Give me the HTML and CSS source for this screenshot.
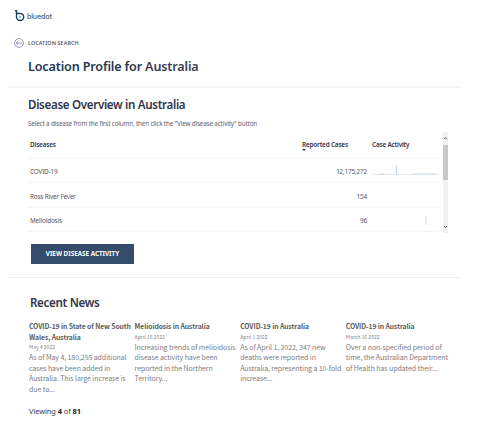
FILE: index.html
```html
<!DOCTYPE html>
<html lang="en">
<head>
<meta charset="utf-8">
<title>Location Profile for Australia</title>
<link rel="stylesheet" href="styles.css">
</head>
<body>
<div class="page">
  <header class="top">
    <div class="brand">
      <svg class="mark" viewBox="0 0 10 12" width="10" height="12"><path d="M0 .8H1.5V7" fill="none" stroke="#17415d" stroke-width="1.4"/><path d="M1.5 7a3.6 3.5 0 1 0 3.6-3.5H1.5" fill="none" stroke="#17415d" stroke-width="1.4"/><circle cx="5" cy="7" r="1" fill="#4fb4e6"/></svg>
      <span class="wordmark">bluedot</span>
    </div>
    <div class="crumb">
      <svg class="back" viewBox="0 0 10 10" width="10" height="10"><g fill="none" stroke="#7d7fb5" stroke-width=".8"><circle cx="5" cy="5" r="4.4"/><path d="M8 5H2.3M4.6 2.7L2.3 5l2.3 2.3"/></g></svg>
      <span class="crumb-text">LOCATION SEARCH</span>
    </div>
    <h1>Location Profile for <span class="place">Australia</span></h1>
  </header>
  <section class="overview">
    <h2>Disease Overview in Australia</h2>
    <p class="hint">Select a disease from the first column, then click the "View disease activity" button</p>
    <div class="table-wrap">
      <div class="table">
        <div class="row head"><b class="c1">Diseases</b><b class="c2"><span class="sorted">Reported Cases</span></b><b class="c3">Case Activity</b></div>
        <div class="row"><span class="c1">COVID-19</span><span class="c2">12,175,272</span><span class="c3"><svg width="68" height="12" viewBox="0 0 68 12"><path d="M0 8.5H67" stroke="#e1e6f4" stroke-width="1"/><path d="M7 7.8h6M40 7.8h24" stroke="#cbd6ea" stroke-width=".8" stroke-dasharray="2 .8"/><path d="M24.5 0v9" stroke="#c3d3ec" stroke-width="1"/></svg></span></div>
        <div class="row"><span class="c1">Ross River Fever</span><span class="c2">154</span><span class="c3"></span></div>
        <div class="row"><span class="c1">Melioidosis</span><span class="c2">96</span><span class="c3"><svg width="68" height="12" viewBox="0 0 68 12"><path d="M54 1v8.5" stroke="#dfe6f1" stroke-width="1.6"/></svg></span></div>
      </div>
      <div class="scroll">
        <svg width="5" height="13" viewBox="0 0 5 13"><path d="M1 7.2L2.5 5.6 4 7.2" fill="none" stroke="#555" stroke-width=".9"/></svg>
        <div class="thumb"></div>
        <svg width="5" height="13" viewBox="0 0 5 13"><path d="M1 6L2.5 7.6 4 6" fill="none" stroke="#555" stroke-width=".9"/></svg>
      </div>
    </div>
    <button class="view">VIEW DISEASE ACTIVITY</button>
  </section>
  <section class="news">
    <h2 class="news-title">Recent News</h2>
    <div class="cards">
      <article><h3>COVID-19 in State of New South<br>Wales, Australia</h3><time>May 4 2022</time><p>As of May 4, 180,255 additional<br>cases have been added in<br>Australia. This large increase is<br>due to...</p></article>
      <article><h3>Melioidosis in Australia</h3><time>April 16 2022</time><p>Increasing trends of melioidosis<br>disease activity have been<br>reported in the Northern<br>Territory...</p></article>
      <article><h3>COVID-19 in Australia</h3><time>April 1 2022</time><p>As of April 1, 2022, 347 new<br>deaths were reported in<br>Australia, representing a 10-fold<br>increase...</p></article>
      <article><h3>COVID-19 in Australia</h3><time>March 16 2022</time><p>Over a non-specified period of<br>time, the Australian Department<br>of Health has updated their...</p></article>
    </div>
    <p class="viewing">Viewing <b>4</b> of <b>81</b></p>
  </section>
</div>
</body>
</html>
```

FILE: styles.css
```css
* { box-sizing: border-box; margin: 0; padding: 0; }
body { background: #fff; font-family: "Noto Sans", sans-serif; color: #55565f; overflow: hidden; }
.page { width: 453px; margin-left: 8px; white-space: nowrap; }
.top { height: 88px; padding: 10px 0 0 7px; border-bottom: 2px solid #f3f4f6; }
.brand { display: flex; gap: 2px; height: 12px; }
.wordmark { font: 500 7.2px/13px Inter, sans-serif; color: #4d6478; letter-spacing: -.2px; }
.crumb { display: flex; gap: 3px; height: 10px; margin: 16px 0 0 -1px; }
.crumb-text { margin-left: 1px; font-size: 5.4px; font-weight: 600; line-height: 11px; letter-spacing: .09px; color: #5c5d68; }
h1, h2 { font-weight: 600; }
h1 { margin: 11px 0 0 13px; font-size: 12.6px; line-height: 16px; letter-spacing: -.16px; color: #26384f; }
.place { color: #3c3c50; }
.overview { height: 190px; padding: 9px 0 0 20px; border-bottom: 1px solid #eeeff1; }
h2 { font-size: 11.6px; line-height: 16px; letter-spacing: -.33px; color: #33364a; }
.hint { margin-top: 5px; font-size: 6.3px; line-height: 12px; letter-spacing: -.155px; color: #62636d; }
.table-wrap { display: flex; height: 103px; gap: 3px; }
.table { width: 412px; }
.row { display: grid; grid-template-columns: 272px 70px 68px; align-items: center; height: 24.4px; padding: 3px 0 0 2px; border-bottom: 1px solid #f4f4f6; font-size: 6.4px; line-height: 12px; letter-spacing: -.18px; }
.head { height: 29px; padding-top: 1px; color: #30334f; }
.head b { font-weight: 600; }
.c2 { text-align: right; padding-right: 5px; }
.head .c2 { text-align: left; padding: 0; }
.c3 { display: flex; }
.sorted { position: relative; }
.sorted::after { content: ""; position: absolute; left: 0; top: 9px; border: 2px solid transparent; border-top-color: #30334f; }
.scroll { display: flex; flex-direction: column; justify-content: space-between; width: 5px; height: 101px; margin-top: 2px; background: #f1f1f1; }
.thumb { height: 35px; margin-bottom: 40px; background: #c9c9c9; }
.view { display: block; width: 103px; height: 20px; margin: 11px 0 0 3px; border: 0; background: #344c69; color: #fff; font: 700 6.3px/20px "Noto Sans", sans-serif; }
.news { padding: 17px 0 0 21px; }
.news-title { margin-left: 1px; }
.cards { display: grid; grid-template-columns: repeat(4, 105.6px); height: 84px; margin-top: 10px; font-family: "Noto Sans CJK SC", sans-serif; }
h3 { font-size: 6.8px; font-weight: 700; line-height: 10.6px; letter-spacing: -.08px; color: #5a5b60; }
time { display: block; font-size: 5.1px; line-height: 10px; color: #85868c; }
.cards p { font-size: 7px; line-height: 10.5px; letter-spacing: -.08px; color: #7b7d85; }
.viewing { font-size: 7.4px; line-height: 12px; letter-spacing: -.05px; color: #3c3d44; }
.viewing b { color: #222; }
```
